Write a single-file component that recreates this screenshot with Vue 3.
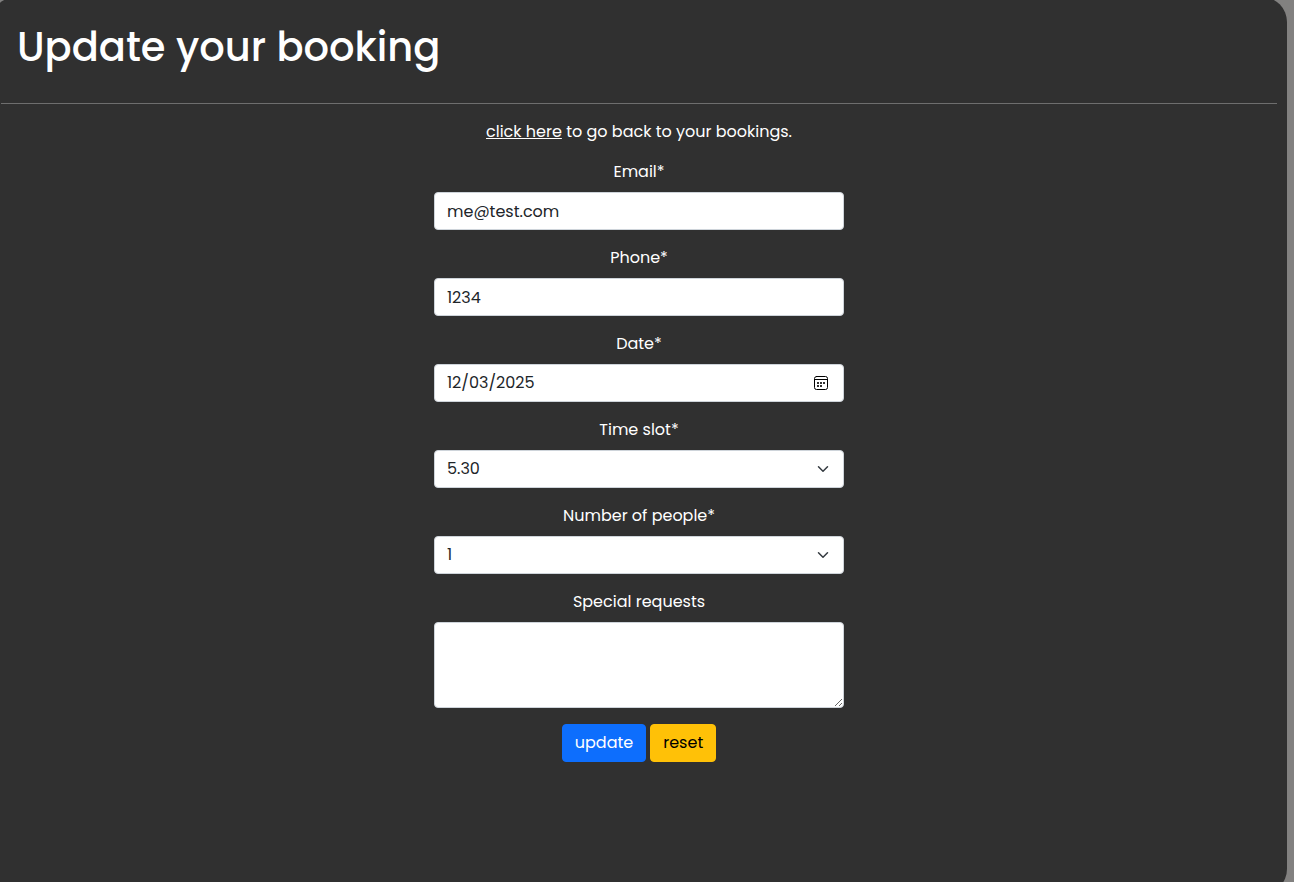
<script setup>
import { ref } from 'vue'

const initial = {
  email: 'me@test.com',
  phone: '1234',
  date: '2025-12-03',
  slot: '5.30',
  people: '1',
  requests: ''
}
const booking = ref({ ...initial })
const slots = ['5.30', '6.30', '7.30', '8.30']
const reset = () => {
  booking.value = { ...initial }
}
</script>

<template>
  <div class="page">
    <main class="card">
      <h1>Update your booking</h1>
      <hr />
      <form @submit.prevent @reset.prevent="reset">
        <p><a href="#">click here</a> to go back to your bookings.</p>

        <div class="field">
          <label for="email">Email*</label>
          <input id="email" v-model="booking.email" class="control" type="email" required />
        </div>

        <div class="field">
          <label for="phone">Phone*</label>
          <input id="phone" v-model="booking.phone" class="control" type="tel" required />
        </div>

        <div class="field">
          <label for="date">Date*</label>
          <div class="wrap">
            <input id="date" v-model="booking.date" class="control" type="date" required />
            <svg class="icon calendar" viewBox="0 0 14 14" width="14" height="14" aria-hidden="true">
              <rect x="0.5" y="0.5" width="13" height="13" rx="2" fill="none" stroke="#000" />
              <path d="M1 3.5H13" stroke="#000" />
              <path d="M3 6h2v2H3zM6 6h2v2H6zM9 6h2v2H9zM3 9h2v2H3zM6 9h2v2H6z" fill="#333" />
            </svg>
          </div>
        </div>

        <div class="field">
          <label for="slot">Time slot*</label>
          <div class="wrap">
            <select id="slot" v-model="booking.slot" class="control" required>
              <option v-for="s in slots" :key="s">{{ s }}</option>
            </select>
            <svg class="icon" viewBox="0 0 16 16" width="16" height="12" aria-hidden="true">
              <path d="m2 5 6 6 6-6" />
            </svg>
          </div>
        </div>

        <div class="field">
          <label for="people">Number of people*</label>
          <div class="wrap">
            <select id="people" v-model="booking.people" class="control" required>
              <option v-for="n in 8" :key="n" :value="String(n)">{{ n }}</option>
            </select>
            <svg class="icon" viewBox="0 0 16 16" width="16" height="12" aria-hidden="true">
              <path d="m2 5 6 6 6-6" />
            </svg>
          </div>
        </div>

        <div class="field">
          <label for="requests">Special requests</label>
          <textarea id="requests" v-model="booking.requests" class="control" rows="3"></textarea>
        </div>

        <div class="actions">
          <button class="update" type="submit">update</button>
          <button class="reset" type="reset">reset</button>
        </div>
      </form>
    </main>
  </div>
</template>

<style>
body {
  margin: 0;
  background: #828180;
}
</style>

<style scoped>
.page {
  display: flex;
  height: 100vh;
  overflow: hidden;
  font-family: Poppins, Inter, "Open Sans", sans-serif;
  font-size: 16px;
  line-height: 24px;
  color: #fff;
}
.card {
  flex: 1;
  box-sizing: border-box;
  margin: -3px 7px -12px -9px;
  padding: 10px;
  border-radius: 25px;
  background: #303030;
}
h1 {
  margin: 16px;
  font-size: 40px;
  font-weight: 500;
  line-height: 48px;
}
hr {
  margin: 32px 0 16px;
  border: 0;
  border-top: 1px solid #6e6e6e;
}
form {
  max-width: 410px;
  margin: 0 auto;
  text-align: center;
}
p {
  margin: 0 0 16px;
}
a {
  color: inherit;
}
.field {
  margin-bottom: 16px;
}
label {
  display: block;
  margin-bottom: 8px;
}
.wrap {
  position: relative;
}
.control {
  display: block;
  box-sizing: border-box;
  width: 100%;
  height: 38px;
  margin: 0;
  padding: 6px 12px;
  border: 1px solid #ced4da;
  border-radius: 4px;
  background: #fff;
  color: #212529;
  font: inherit;
  appearance: none;
}
textarea.control {
  height: auto;
  min-height: 86px;
  resize: vertical;
}
.control::-webkit-datetime-edit,
.control::-webkit-datetime-edit-fields-wrapper {
  padding: 0;
}
.control::-webkit-datetime-edit-month-field,
.control::-webkit-datetime-edit-day-field,
.control::-webkit-datetime-edit-year-field {
  padding: 0;
}
.control::-webkit-calendar-picker-indicator {
  opacity: 0;
}
.icon {
  position: absolute;
  top: 0;
  right: 13px;
  bottom: 0;
  margin: auto 0;
  fill: none;
  stroke: #343a40;
  stroke-width: 2;
  stroke-linecap: round;
  stroke-linejoin: round;
  pointer-events: none;
}
.calendar {
  right: 16px;
  stroke: none;
  stroke-width: 1;
}
.actions {
  display: flex;
  justify-content: center;
  gap: 4px;
}
button {
  padding: 6px 12px;
  border: 1px solid;
  border-radius: 4px;
  font: inherit;
}
.update {
  border-color: #0d6efd;
  background: #0d6efd;
  color: #fff;
}
.reset {
  border-color: #ffc107;
  background: #ffc107;
  color: #000;
}
</style>
